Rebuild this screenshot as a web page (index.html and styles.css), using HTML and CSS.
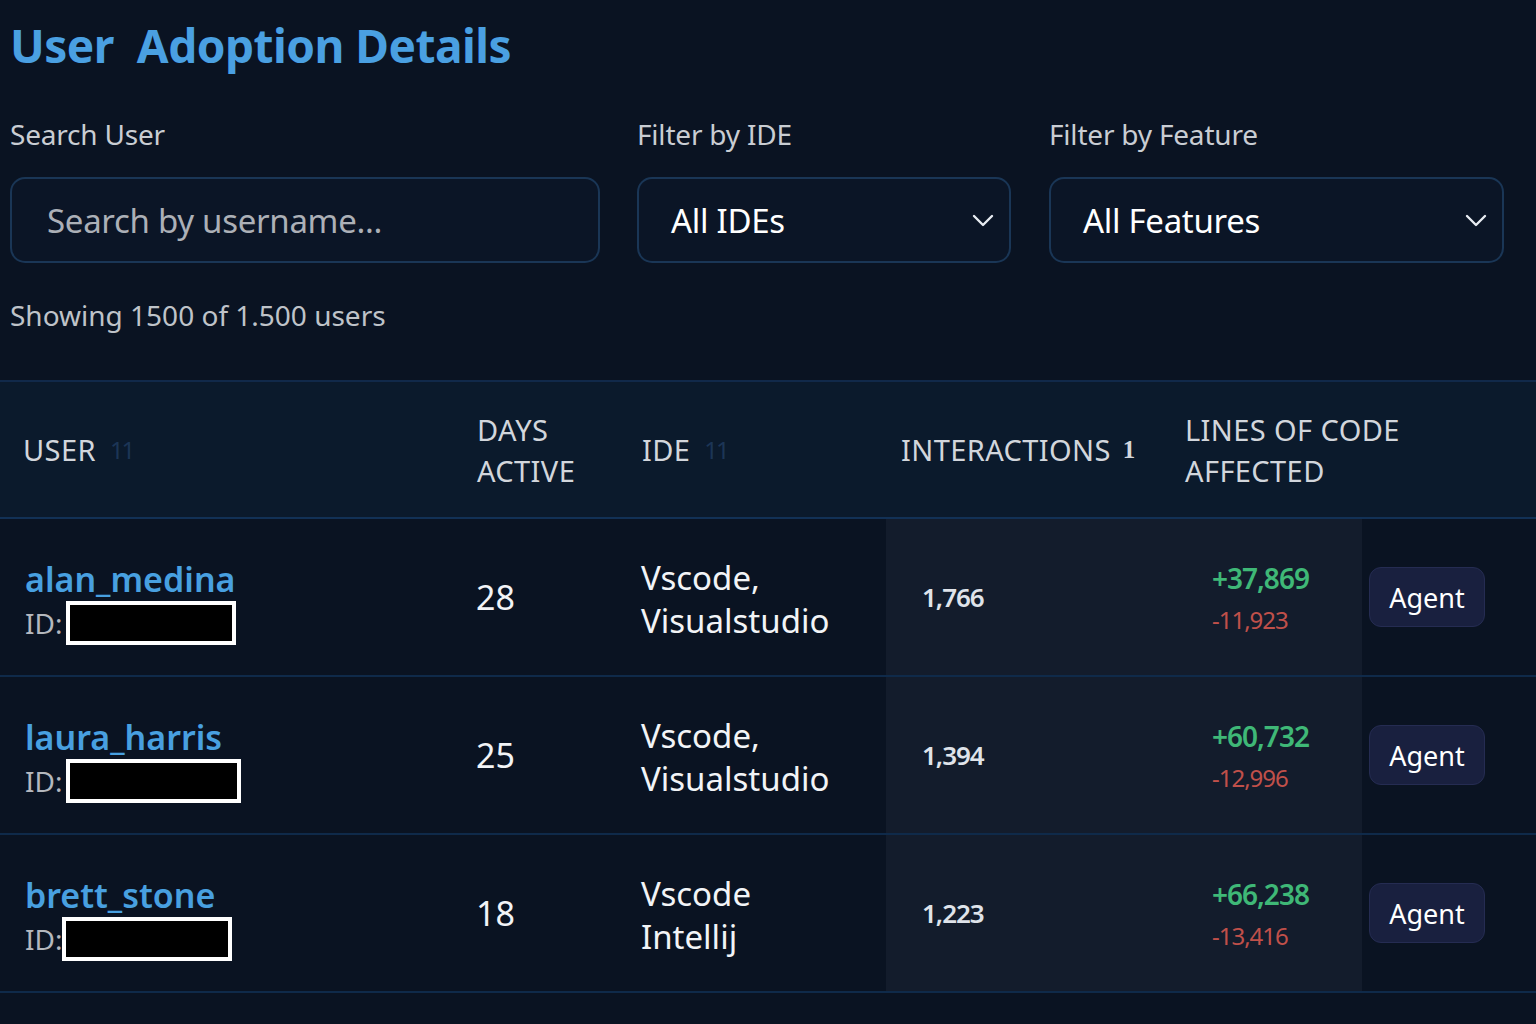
FILE: index.html
```html
<!DOCTYPE html>
<html lang="en">
<head>
<meta charset="utf-8">
<title>User Adoption Details</title>
<link rel="stylesheet" href="styles.css">
</head>
<body>
<div class="page">
  <h1 class="title">User&nbsp; Adoption Details</h1>

  <div class="filters">
    <div class="field field-search">
      <label class="label">Search User</label>
      <div class="control"><span class="placeholder">Search by username...</span></div>
    </div>
    <div class="field field-ide">
      <label class="label">Filter by IDE</label>
      <div class="control select">
        <span class="value">All IDEs</span>
        <svg class="chev" width="22" height="14" viewBox="0 0 22 14"><path d="M2 2 L11 11 L20 2" fill="none" stroke="#e8ecf2" stroke-width="2.4" stroke-linecap="round" stroke-linejoin="round"/></svg>
      </div>
    </div>
    <div class="field field-feature">
      <label class="label">Filter by Feature</label>
      <div class="control select">
        <span class="value">All Features</span>
        <svg class="chev" width="22" height="14" viewBox="0 0 22 14"><path d="M2 2 L11 11 L20 2" fill="none" stroke="#e8ecf2" stroke-width="2.4" stroke-linecap="round" stroke-linejoin="round"/></svg>
      </div>
    </div>
  </div>

  <p class="count">Showing 1500 of 1.500 users</p>
</div>

<div class="table">
  <div class="row head">
    <div class="th c-user">USER <span class="sort">11</span></div>
    <div class="th c-days">DAYS<br>ACTIVE</div>
    <div class="th c-ide">IDE <span class="sort">11</span></div>
    <div class="th c-int">INTERACTIONS <span class="sort-on">1</span></div>
    <div class="th c-loc">LINES OF CODE<br>AFFECTED</div>
    <div class="th c-feat"></div>
  </div>

  <div class="row">
    <div class="td c-user">
      <div class="uname">alan_medina</div>
      <div class="uid">ID:<span class="redact r1"></span></div>
    </div>
    <div class="td c-days">28</div>
    <div class="td c-ide">Vscode,<br>Visualstudio</div>
    <div class="td c-int shade">1,766</div>
    <div class="td c-loc shade"><span class="add">+37,869</span><span class="del">-11,923</span></div>
    <div class="td c-feat"><span class="badge">Agent</span></div>
  </div>

  <div class="row">
    <div class="td c-user">
      <div class="uname">laura_harris</div>
      <div class="uid">ID:<span class="redact r2"></span></div>
    </div>
    <div class="td c-days">25</div>
    <div class="td c-ide">Vscode,<br>Visualstudio</div>
    <div class="td c-int shade">1,394</div>
    <div class="td c-loc shade"><span class="add">+60,732</span><span class="del">-12,996</span></div>
    <div class="td c-feat"><span class="badge">Agent</span></div>
  </div>

  <div class="row last">
    <div class="td c-user">
      <div class="uname">brett_stone</div>
      <div class="uid">ID:<span class="redact r3"></span></div>
    </div>
    <div class="td c-days">18</div>
    <div class="td c-ide">Vscode<br>Intellij</div>
    <div class="td c-int shade">1,223</div>
    <div class="td c-loc shade"><span class="add">+66,238</span><span class="del">-13,416</span></div>
    <div class="td c-feat"><span class="badge">Agent</span></div>
  </div>
</div>
</body>
</html>
```

FILE: styles.css
```css
* { box-sizing: border-box; }
html, body {
  margin: 0;
  padding: 0;
  background: #0a1322;
  font-family: "Noto Sans", "Open Sans", sans-serif;
  color: #e6eaf0;
  height: 1024px;
  overflow: hidden;
}

.page {
  padding: 13px 10px 0 10px;
}

.title {
  margin: 0;
  font-size: 46px;
  font-weight: 700;
  color: #4aa0e2;
  line-height: 64px;
  letter-spacing: -0.5px;
}

.filters {
  display: flex;
  gap: 37px;
  margin-top: 37px;
}
.field { display: flex; flex-direction: column; }
.field-search { width: 590px; }
.field-ide { width: 374px; }
.field-feature { width: 455px; margin-left: 1px; }

.label {
  font-size: 28px;
  color: #c9cdd3;
  line-height: 40px;
  letter-spacing: -0.2px;
}

.control {
  margin-top: 23px;
  height: 86px;
  border: 2px solid #1a3656;
  border-radius: 15px;
  background: #0b1526;
  display: flex;
  align-items: center;
}
.placeholder {
  font-size: 33px;
  color: #acb0b7;
  padding-left: 35px;
  letter-spacing: -0.3px;
}
.select { justify-content: space-between; padding: 0 15px 0 32px; }
.value {
  font-size: 33px;
  color: #ffffff;
  letter-spacing: -0.3px;
}
.chev { margin-top: 2px; }

.count {
  margin: 32px 0 0 0;
  font-size: 28px;
  line-height: 40px;
  color: #bfc3c9;
  letter-spacing: 0px;
}

.table {
  margin-top: 45px;
  border-top: 2px solid #11294a;
}
.row {
  display: grid;
  grid-template-columns: 460px 165px 261px 279px 197px 174px;
  height: 158px;
  border-bottom: 2px solid #0f2a4a;
}
.row.head {
  height: 137px;
  background: #0b1a2c;
  border-bottom: 2px solid #123156;
}

.th {
  display: flex;
  align-items: center;
  font-size: 29px;
  line-height: 41px;
  color: #d2d6dc;
  letter-spacing: 0.4px;
  padding-left: 17px;
  white-space: nowrap;
}
.th.c-user { padding-left: 23px; }
.th.c-int { padding-left: 15px; }
.th.c-loc { padding-left: 20px; }
.sort {
  color: #1c3556;
  font-size: 24px;
  margin-left: 14px;
  letter-spacing: -2px;
}
.sort-on {
  color: #d2d6dc;
  font-family: "Liberation Serif", serif;
  font-size: 25px;
  font-weight: 700;
  margin-left: 12px;
}

.td {
  display: flex;
  align-items: center;
  padding-left: 16px;
  font-size: 34px;
  color: #f2f4f7;
}
.td.c-user {
  flex-direction: column;
  align-items: flex-start;
  justify-content: center;
  padding-left: 25px;
  padding-top: 8px;
}
.uname {
  font-size: 34px;
  font-weight: 600;
  color: #48a0e0;
  line-height: 44px;
}
.uid {
  display: flex;
  align-items: center;
  font-size: 28px;
  color: #b4b8be;
  line-height: 44px;
  height: 44px;
}
.redact {
  display: inline-block;
  height: 44px;
  background: #000;
  border: 4px solid #ffffff;
  margin-left: 4px;
}
.r1 { width: 170px; }
.r2 { width: 175px; }
.r3 { width: 170px; margin-left: 0; }

.td.c-days { padding-left: 16px; }
.td.c-ide {
  font-size: 33px;
  line-height: 43px;
  padding-left: 16px;
  padding-top: 4px;
}

.shade { background: #131c2c; }
.td.c-int {
  padding-left: 36px;
  font-size: 26px;
  font-weight: 600;
  color: #dfe3ea;
  letter-spacing: -1px;
}
.td.c-loc {
  flex-direction: column;
  align-items: flex-start;
  justify-content: center;
  padding-left: 47px;
  padding-top: 4px;
}
.add {
  font-size: 28px;
  font-weight: 600;
  color: #3fb877;
  line-height: 42px;
  letter-spacing: -1px;
}
.del {
  font-size: 24px;
  color: #c0504a;
  line-height: 42px;
  letter-spacing: -1px;
}

.td.c-feat { padding-left: 7px; }
.badge {
  display: inline-flex;
  align-items: center;
  justify-content: center;
  width: 116px;
  height: 60px;
  border-radius: 12px;
  background: #19203f;
  border: 1px solid #252c52;
  color: #ffffff;
  font-size: 27px;
}
```
